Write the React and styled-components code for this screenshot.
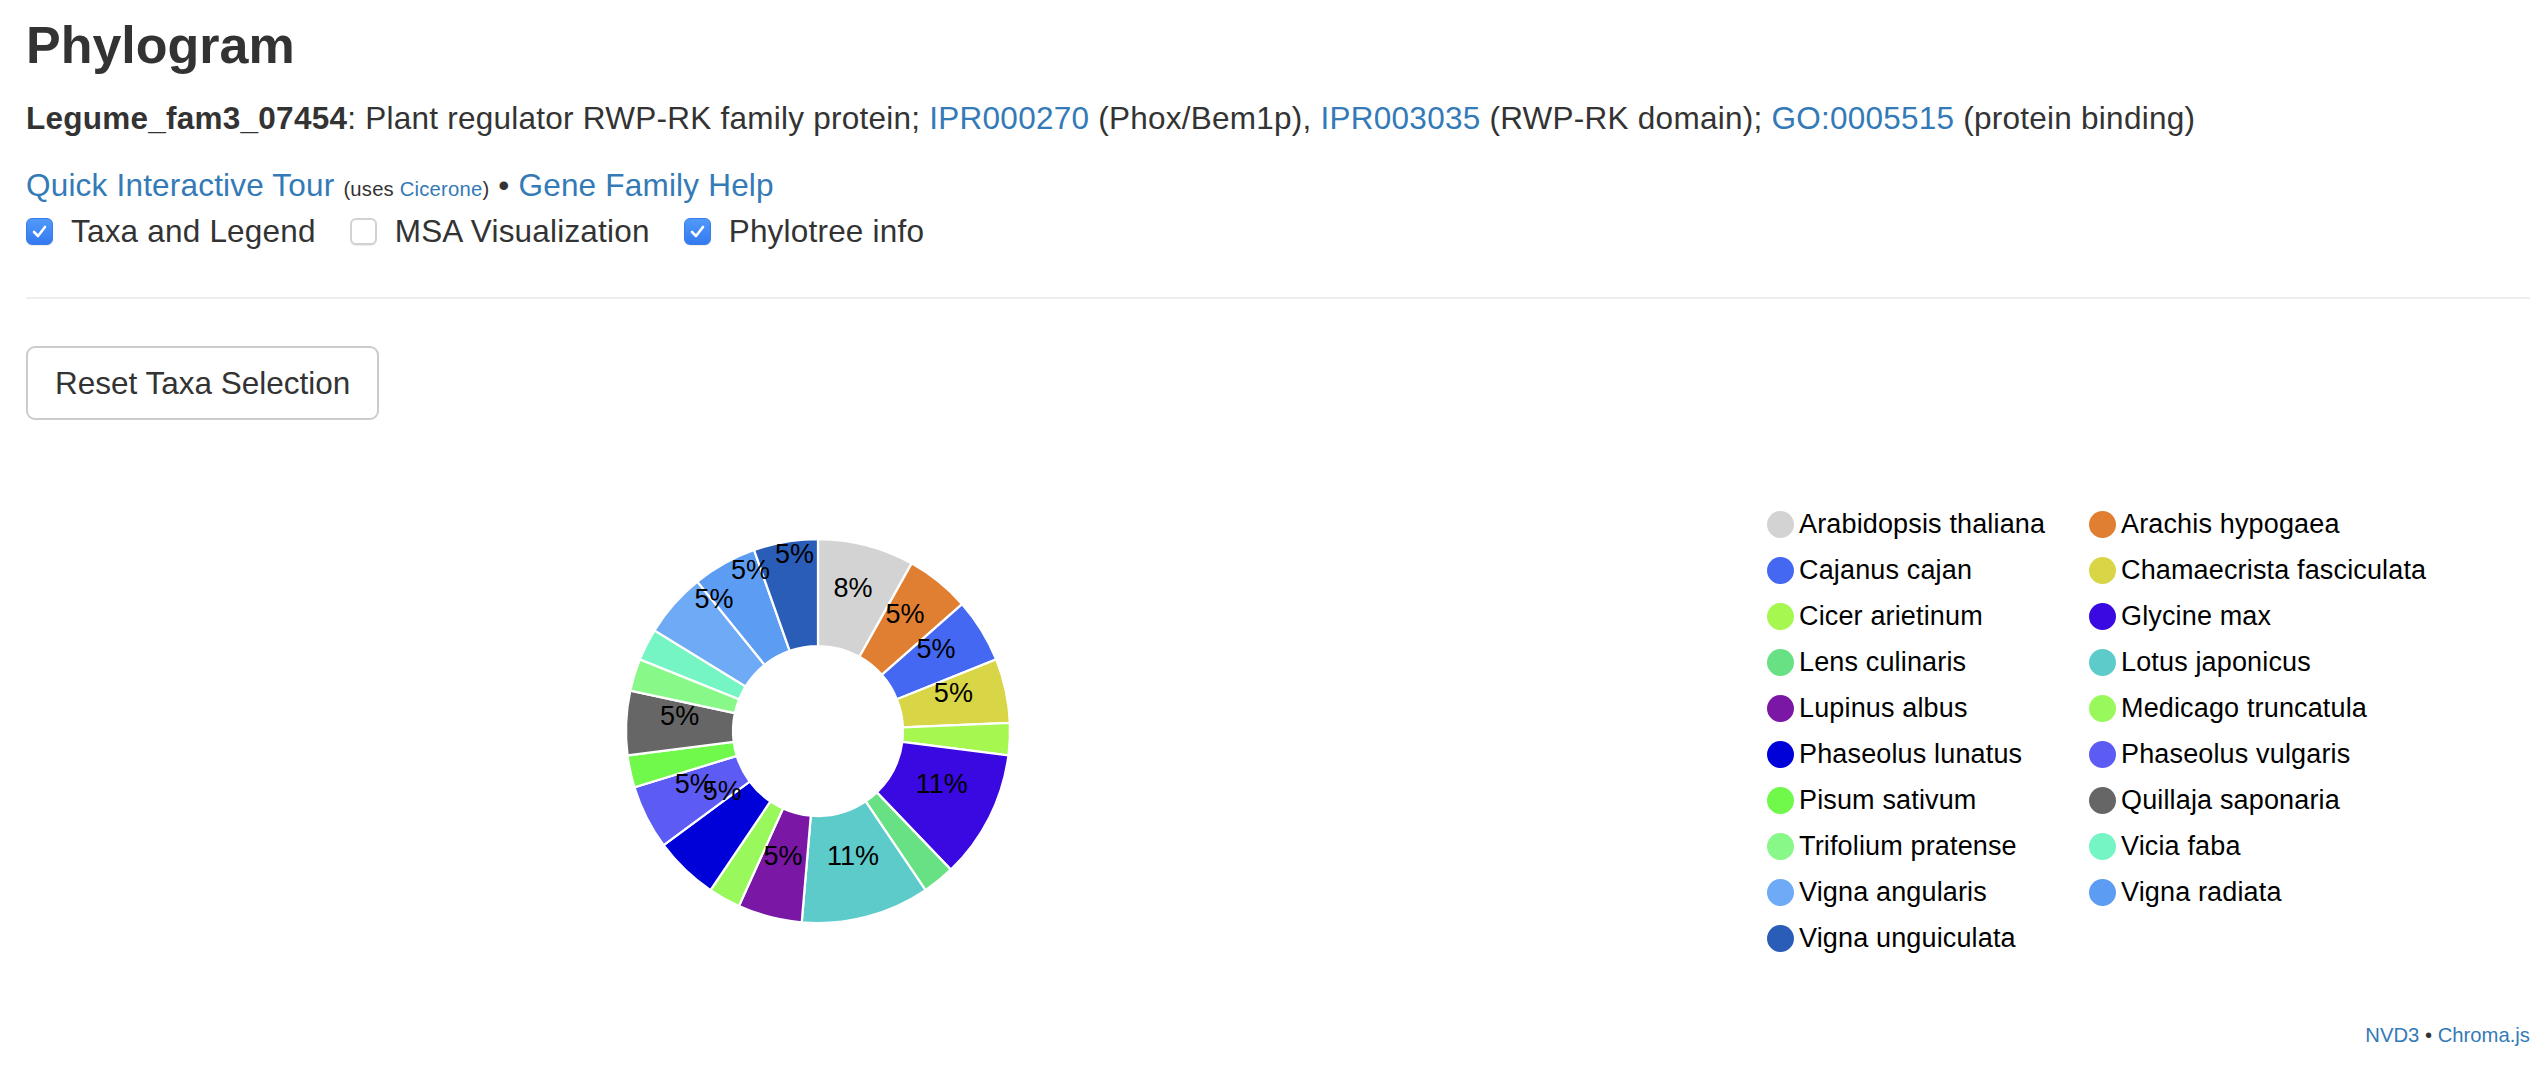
import React from 'react';
import styled, { createGlobalStyle } from 'styled-components';

const linkColor = '#337ab7';

const GlobalStyle = createGlobalStyle`
    html, body {
        margin: 0;
        padding: 0;
        background: #fff;
    }
    body {
        font-family: "Liberation Sans", Arial, Helvetica, sans-serif;
        color: #333;
    }
`;

const Page = styled.div`
    padding: 16px 6px 0 26px;
`;

const Title = styled.h3`
    margin: 0;
    font-size: 52px;
    line-height: 58px;
    font-weight: 700;
    color: #333;
`;

const Summary = styled.p`
    margin: 22px 0 0;
    font-size: 31.5px;
    line-height: 45px;
    letter-spacing: 0.25px;
    white-space: nowrap;
`;

const Link = styled.a`
    color: ${linkColor};
    text-decoration: none;
    cursor: pointer;
`;

const Small = styled.small`
    font-size: 20.25px;
`;

const LinksLine = styled.div`
    margin-top: 22px;
    font-size: 31.5px;
    line-height: 45px;
    letter-spacing: 0.2px;
`;

const CheckRow = styled.div`
    display: flex;
    align-items: center;
    gap: 34px;
    margin-top: -3px;
    font-size: 31.5px;
    line-height: 45px;
    letter-spacing: 0.2px;
`;

const CheckItem = styled.label`
    display: flex;
    align-items: center;
    gap: 18px;
    cursor: pointer;
`;

const Box = styled.span`
    box-sizing: border-box;
    width: 27px;
    height: 27px;
    border-radius: 6px;
    display: flex;
    align-items: center;
    justify-content: center;
    background: ${p => p.checked ? 'linear-gradient(#519af8, #3479f1)' : '#fff'};
    border: ${p => p.checked ? '1px solid #3a7ce8' : '2px solid #d2d2d2'};
    box-shadow: 0 1px 1px rgba(0,0,0,0.08);
`;

const Divider = styled.hr`
    margin: 43px 0 0;
    border: 0;
    border-top: 2px solid #eee;
`;

const Button = styled.button`
    margin-top: 47px;
    box-sizing: border-box;
    height: 74px;
    padding: 0 27px;
    font-family: inherit;
    font-size: 31.5px;
    line-height: 44px;
    color: #333;
    background: #fff;
    border: 2px solid #ccc;
    border-radius: 9px;
    cursor: pointer;
`;

const ChartRow = styled.div`
    display: flex;
    align-items: flex-start;
    margin-top: 81px;
`;

const PieBox = styled.svg`
    flex: none;
    margin: 20px 0 0 582px;
    overflow: visible;
`;

const SliceLabel = styled.text`
    font-family: "Liberation Sans", Arial, sans-serif;
    font-size: 27px;
    fill: #000;
`;

const Legend = styled.div`
    margin-left: 739px;
    display: grid;
    grid-template-columns: 322px 322px;
    grid-auto-rows: 46px;
`;

const LegendItem = styled.div`
    display: flex;
    align-items: center;
    gap: 5px;
    font-size: 27px;
    letter-spacing: 0.15px;
    color: #000;
    white-space: nowrap;
`;

const Dot = styled.span`
    width: 27px;
    height: 27px;
    border-radius: 50%;
    background: ${p => p.color};
    flex: none;
`;

const Footer = styled.div`
    margin-top: 60px;
    text-align: right;
    font-size: 20.25px;
    line-height: 29px;
`;

// name, gene count, colour, label shift (nvd3 moves colliding labels up)
const TAXA = [
    ['Arabidopsis thaliana', 3, '#d3d3d3'],
    ['Arachis hypogaea', 2, '#e07f32'],
    ['Cajanus cajan', 2, '#4468f2'],
    ['Chamaecrista fasciculata', 2, '#d8d546'],
    ['Cicer arietinum', 1, '#a6f750'],
    ['Glycine max', 4, '#3a08e0'],
    ['Lens culinaris', 1, '#68e184'],
    ['Lotus japonicus', 4, '#5ecbcb'],
    ['Lupinus albus', 2, '#7a17a5'],
    ['Medicago truncatula', 1, '#99f95c'],
    ['Phaseolus lunatus', 2, '#0000d8', 31],
    ['Phaseolus vulgaris', 2, '#5c5cf4'],
    ['Pisum sativum', 1, '#70f84b'],
    ['Quillaja saponaria', 2, '#666666'],
    ['Trifolium pratense', 1, '#88f888'],
    ['Vicia faba', 1, '#74f5c3'],
    ['Vigna angularis', 2, '#6eaaf6', 31],
    ['Vigna radiata', 2, '#5d9cf3', 31],
    ['Vigna unguiculata', 2, '#2a5db8', 31],
];

const SIZE = 420;
const C = SIZE / 2;
const R_OUT = 192;
const R_IN = 85;

const pt = (r, a) => [C + r * Math.sin(a), C - r * Math.cos(a)];

const arcPath = (a0, a1) => {
    const large = a1 - a0 > Math.PI ? 1 : 0;
    const [x0, y0] = pt(R_OUT, a0);
    const [x1, y1] = pt(R_OUT, a1);
    const [x2, y2] = pt(R_IN, a1);
    const [x3, y3] = pt(R_IN, a0);
    return `M${x0},${y0}A${R_OUT},${R_OUT} 0 ${large} 1 ${x1},${y1}L${x2},${y2}A${R_IN},${R_IN} 0 ${large} 0 ${x3},${y3}Z`;
};

const Check = () => (
    <svg width="17" height="17" viewBox="0 0 17 17">
        <path d="M3 9 L7 13 L14 4" fill="none" stroke="#fff" strokeWidth="2.6" strokeLinecap="round" strokeLinejoin="round" />
    </svg>
);

const Checkbox = ({ checked, children }) => (
    <CheckItem>
        <Box checked={checked}>{checked && <Check />}</Box>
        {children}
    </CheckItem>
);

const Pie = () => {
    const total = TAXA.reduce((s, t) => s + t[1], 0);
    let acc = 0;
    const slices = TAXA.map(([name, n, color, shift]) => {
        const a0 = acc / total * Math.PI * 2;
        acc += n;
        const a1 = acc / total * Math.PI * 2;
        const [lx, ly] = pt((R_OUT + R_IN) / 2, (a0 + a1) / 2);
        return { name, n, color, shift: shift || 0, a0, a1, lx, ly };
    });

    return (
        <PieBox width={SIZE} height={SIZE}>
            {slices.map(s => (
                <path key={s.name} d={arcPath(s.a0, s.a1)} fill={s.color} stroke="#fff" strokeWidth="2.25" />
            ))}
            {slices.filter(s => s.n > 1).map(s => (
                <SliceLabel key={s.name} x={s.lx} y={s.ly - s.shift} textAnchor="middle">
                    {Math.round(s.n / total * 100)}%
                </SliceLabel>
            ))}
        </PieBox>
    );
};

const App = () => {
    return (
        <Page>
            <GlobalStyle />
            <Title>Phylogram</Title>
            <Summary>
                <b>Legume_fam3_07454</b>: Plant regulator RWP-RK family protein; <Link>IPR000270</Link> (Phox/Bem1p), <Link>IPR003035</Link> (RWP-RK domain); <Link>GO:0005515</Link> (protein binding)
            </Summary>
            <LinksLine>
                <Link>Quick Interactive Tour</Link> <Small>(uses <Link>Cicerone</Link>)</Small> • <Link>Gene Family Help</Link>
            </LinksLine>
            <CheckRow>
                <Checkbox checked>Taxa and Legend</Checkbox>
                <Checkbox>MSA Visualization</Checkbox>
                <Checkbox checked>Phylotree info</Checkbox>
            </CheckRow>
            <Divider />
            <Button>Reset Taxa Selection</Button>
            <ChartRow>
                <Pie />
                <Legend>
                    {TAXA.map(([name, , color]) => (
                        <LegendItem key={name}>
                            <Dot color={color} />
                            {name}
                        </LegendItem>
                    ))}
                </Legend>
            </ChartRow>
            <Footer>
                <Link>NVD3</Link> • <Link>Chroma.js</Link>
            </Footer>
        </Page>
    );
};

export default App;
